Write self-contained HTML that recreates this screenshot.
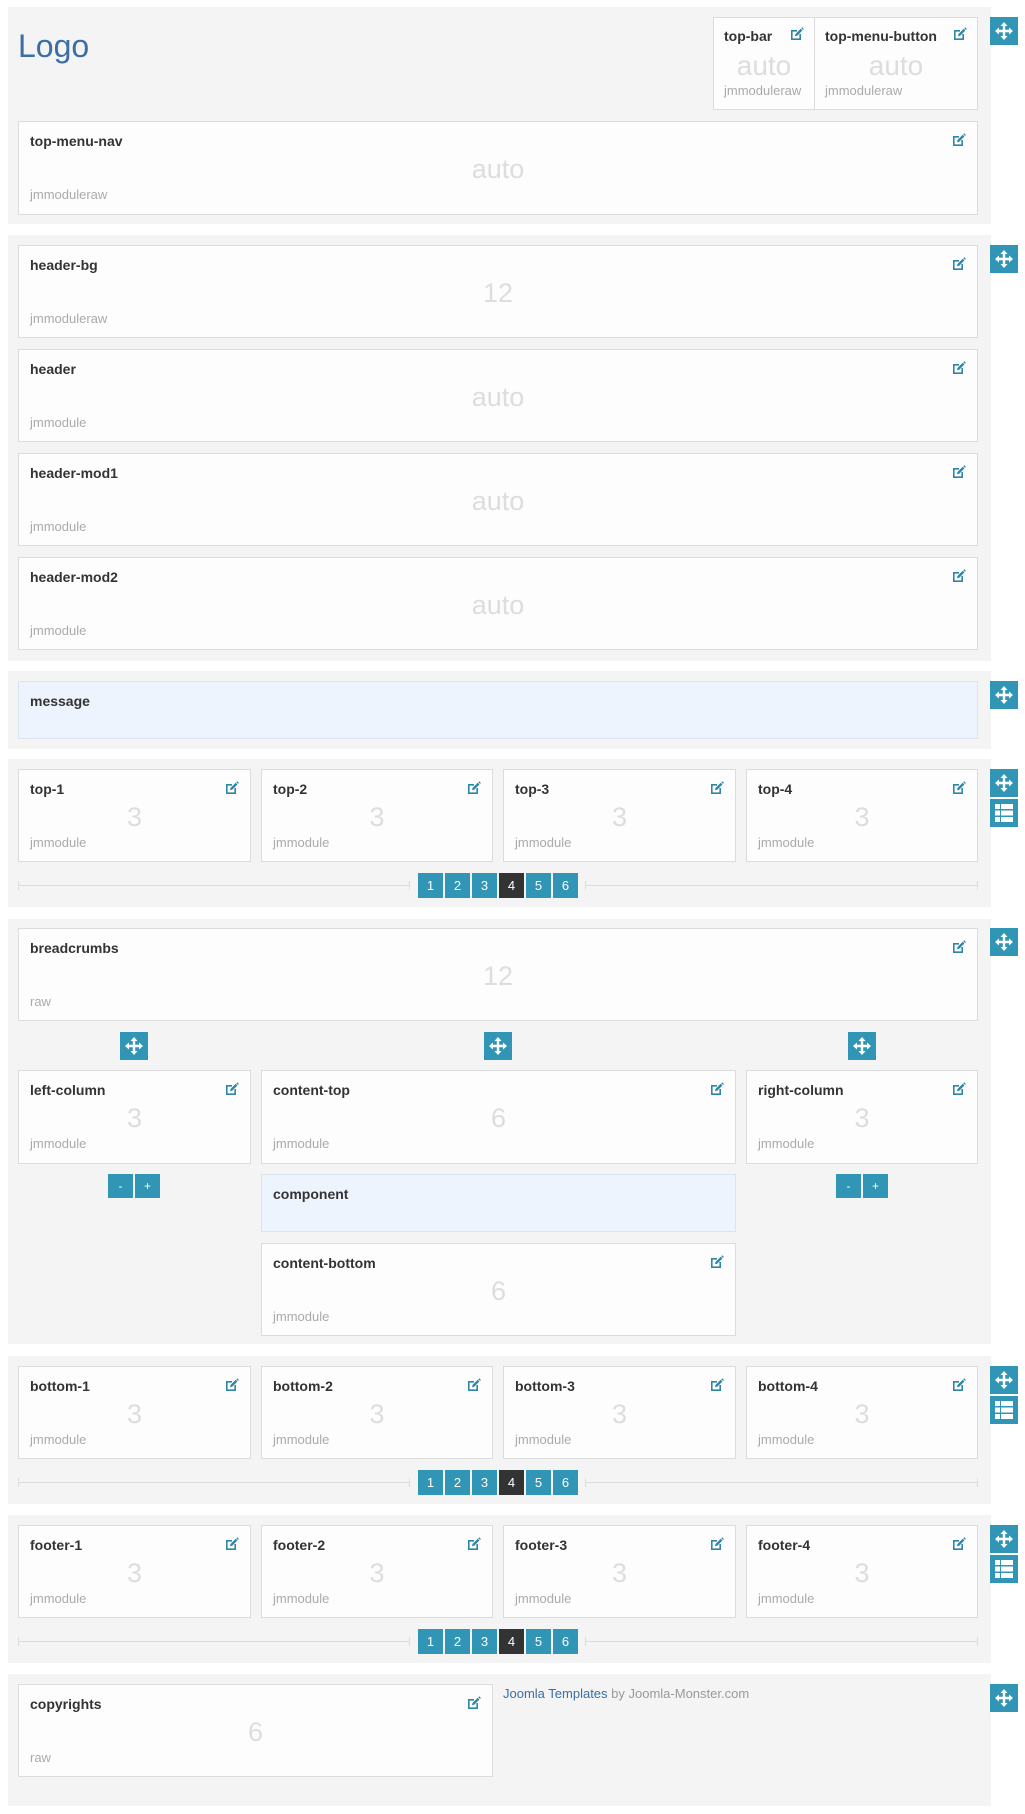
<!DOCTYPE html>
<html><head><meta charset="utf-8"><style>
*{box-sizing:border-box;margin:0;padding:0}
body{width:1025px;height:1814px;background:#fff;position:relative;font-family:"Liberation Sans",sans-serif;overflow:hidden}
.sec{position:absolute;left:8px;width:983px;background:#f4f4f4}
.b{position:absolute;background:#fdfdfd;border:1px solid #dcdcdc}
.b.m{background:#edf4fd;border-color:#dbe3ee}
.t{position:absolute;left:11px;top:11px;font-size:14px;line-height:16px;font-weight:bold;color:#333}
.n{position:absolute;left:0;right:0;top:32px;text-align:center;font-size:27px;line-height:30px;color:#ddd}
.s{position:absolute;left:11px;top:65px;font-size:13px;line-height:15px;color:#aaa}
.e{position:absolute;right:11px;top:11px;width:14px;height:14px}
.mv{position:absolute;width:28px;height:28px;background:#3196b6}
.mv svg,.ls svg{position:absolute;left:5px;top:5px}
.ls{position:absolute;width:28px;height:28px;background:#3196b6}
.pg{position:absolute;left:18px;width:960px;height:25px}
.pg .ln{position:absolute;top:12px;height:1px;background:#ddd}
.pg .ln.l{left:0;width:392px}.pg .ln.r{left:567px;right:0}
.pg .ln:before,.pg .ln:after{content:"";position:absolute;top:-4px;width:1px;height:9px;background:#ddd}
.pg .ln:before{left:0}.pg .ln:after{right:0}
.pg span{position:absolute;top:0;width:25px;height:25px;background:#3196b6;color:#fff;font-size:13px;line-height:25px;text-align:center}
.pg span.a{background:#333}
.pm{position:absolute;width:24px;height:24px;background:#3196b6;color:#fff;font-size:12px;line-height:24px;text-align:center}
</style></head><body>
<svg width="0" height="0" style="position:absolute"><defs>
<symbol id="ed" viewBox="0 0 14 14"><path d="M1 3h6v1.6H2.6v6.8h6.8V7H11v6H1z" fill="#2f86a6"/><path d="M5 9.2l.5-2.2 5.2-5.2 1.7 1.7-5.2 5.2z" fill="#2f86a6"/><path d="M11.3 1.2l.9-.9 1.7 1.7-.9.9z" fill="#2f86a6"/></symbol>
<symbol id="mvI" viewBox="0 0 18 18"><path d="M9 0l3.5 4H10.2v3.8H14V5.5l4 3.5-4 3.5v-2.3h-3.8V14h2.3L9 18l-3.5-4h2.3v-3.8H4v2.3L0 9l4-3.5v2.3h3.8V4H5.5z" fill="#fff"/></symbol>
<symbol id="lsI" viewBox="0 0 18 18"><path d="M0 0h5v5H0zM6 0h12v5H6zM0 6.5h5v5H0zM6 6.5h12v5H6zM0 13h5v5H0zM6 13h12v5H6z" fill="#fff"/></symbol>
</defs></svg>

<!-- section 1 -->
<div class="sec" style="top:7px;height:217px"></div>
<div style="position:absolute;left:18px;top:26px;font-size:32px;color:#3a6ea5;line-height:40px">Logo</div>
<div class="b" style="left:713px;top:17px;width:102px;height:93px"><div class="t" style="left:10px;top:10px">top-bar</div><svg class="e" style="right:10px;top:9px"><use href="#ed"/></svg><div class="n" style="top:33px;font-size:28px">auto</div><div class="s" style="left:10px;top:65px">jmmoduleraw</div></div>
<div class="b" style="left:814px;top:17px;width:164px;height:93px"><div class="t" style="left:10px;top:10px">top-menu-button</div><svg class="e" style="right:10px;top:9px"><use href="#ed"/></svg><div class="n" style="top:33px;font-size:28px">auto</div><div class="s" style="left:10px;top:65px">jmmoduleraw</div></div>
<div class="b" style="left:18px;top:121px;width:960px;height:94px"><div class="t">top-menu-nav</div><svg class="e"><use href="#ed"/></svg><div class="n">auto</div><div class="s">jmmoduleraw</div></div>
<div class="mv" style="left:990px;top:17px"><svg width="18" height="18"><use href="#mvI"/></svg></div>

<!-- section 2 -->
<div class="sec" style="top:235px;height:426px"></div>
<div class="b" style="left:18px;top:245px;width:960px;height:93px"><div class="t">header-bg</div><svg class="e"><use href="#ed"/></svg><div class="n">12</div><div class="s">jmmoduleraw</div></div>
<div class="b" style="left:18px;top:349px;width:960px;height:93px"><div class="t">header</div><svg class="e"><use href="#ed"/></svg><div class="n">auto</div><div class="s">jmmodule</div></div>
<div class="b" style="left:18px;top:453px;width:960px;height:93px"><div class="t">header-mod1</div><svg class="e"><use href="#ed"/></svg><div class="n">auto</div><div class="s">jmmodule</div></div>
<div class="b" style="left:18px;top:557px;width:960px;height:93px"><div class="t">header-mod2</div><svg class="e"><use href="#ed"/></svg><div class="n">auto</div><div class="s">jmmodule</div></div>
<div class="mv" style="left:990px;top:245px"><svg width="18" height="18"><use href="#mvI"/></svg></div>

<!-- section 3 -->
<div class="sec" style="top:671px;height:78px"></div>
<div class="b m" style="left:18px;top:681px;width:960px;height:58px"><div class="t">message</div></div>
<div class="mv" style="left:990px;top:681px"><svg width="18" height="18"><use href="#mvI"/></svg></div>

<!-- section 4 -->
<div class="sec" style="top:759px;height:148px"></div>
<div class="b" style="left:18px;top:769px;width:233px;height:93px"><div class="t">top-1</div><svg class="e"><use href="#ed"/></svg><div class="n">3</div><div class="s">jmmodule</div></div>
<div class="b" style="left:261px;top:769px;width:232px;height:93px"><div class="t">top-2</div><svg class="e"><use href="#ed"/></svg><div class="n">3</div><div class="s">jmmodule</div></div>
<div class="b" style="left:503px;top:769px;width:233px;height:93px"><div class="t">top-3</div><svg class="e"><use href="#ed"/></svg><div class="n">3</div><div class="s">jmmodule</div></div>
<div class="b" style="left:746px;top:769px;width:232px;height:93px"><div class="t">top-4</div><svg class="e"><use href="#ed"/></svg><div class="n">3</div><div class="s">jmmodule</div></div>
<div class="pg" style="top:873px"><div class="ln l"></div><div class="ln r"></div><span style="left:400px">1</span><span style="left:427px">2</span><span style="left:454px">3</span><span class="a" style="left:481px">4</span><span style="left:508px">5</span><span style="left:535px">6</span></div>
<div class="mv" style="left:990px;top:769px"><svg width="18" height="18"><use href="#mvI"/></svg></div>
<div class="ls" style="left:990px;top:799px"><svg width="18" height="18"><use href="#lsI"/></svg></div>

<!-- section 5 -->
<div class="sec" style="top:919px;height:425px"></div>
<div class="b" style="left:18px;top:928px;width:960px;height:93px"><div class="t">breadcrumbs</div><svg class="e"><use href="#ed"/></svg><div class="n">12</div><div class="s">raw</div></div>
<div class="mv" style="left:120px;top:1032px"><svg width="18" height="18"><use href="#mvI"/></svg></div>
<div class="mv" style="left:484px;top:1032px"><svg width="18" height="18"><use href="#mvI"/></svg></div>
<div class="mv" style="left:848px;top:1032px"><svg width="18" height="18"><use href="#mvI"/></svg></div>
<div class="b" style="left:18px;top:1070px;width:233px;height:94px"><div class="t">left-column</div><svg class="e"><use href="#ed"/></svg><div class="n">3</div><div class="s">jmmodule</div></div>
<div class="b" style="left:261px;top:1070px;width:475px;height:94px"><div class="t">content-top</div><svg class="e"><use href="#ed"/></svg><div class="n">6</div><div class="s">jmmodule</div></div>
<div class="b" style="left:746px;top:1070px;width:232px;height:94px"><div class="t">right-column</div><svg class="e"><use href="#ed"/></svg><div class="n">3</div><div class="s">jmmodule</div></div>
<div class="pm" style="left:108px;top:1174px;width:25px">-</div><div class="pm" style="left:135px;top:1174px;width:25px">+</div>
<div class="pm" style="left:836px;top:1174px;width:25px">-</div><div class="pm" style="left:863px;top:1174px;width:25px">+</div>
<div class="b m" style="left:261px;top:1174px;width:475px;height:58px"><div class="t">component</div></div>
<div class="b" style="left:261px;top:1243px;width:475px;height:93px"><div class="t">content-bottom</div><svg class="e"><use href="#ed"/></svg><div class="n">6</div><div class="s">jmmodule</div></div>
<div class="mv" style="left:990px;top:928px"><svg width="18" height="18"><use href="#mvI"/></svg></div>

<!-- section 6 -->
<div class="sec" style="top:1356px;height:148px"></div>
<div class="b" style="left:18px;top:1366px;width:233px;height:93px"><div class="t">bottom-1</div><svg class="e"><use href="#ed"/></svg><div class="n">3</div><div class="s">jmmodule</div></div>
<div class="b" style="left:261px;top:1366px;width:232px;height:93px"><div class="t">bottom-2</div><svg class="e"><use href="#ed"/></svg><div class="n">3</div><div class="s">jmmodule</div></div>
<div class="b" style="left:503px;top:1366px;width:233px;height:93px"><div class="t">bottom-3</div><svg class="e"><use href="#ed"/></svg><div class="n">3</div><div class="s">jmmodule</div></div>
<div class="b" style="left:746px;top:1366px;width:232px;height:93px"><div class="t">bottom-4</div><svg class="e"><use href="#ed"/></svg><div class="n">3</div><div class="s">jmmodule</div></div>
<div class="pg" style="top:1470px"><div class="ln l"></div><div class="ln r"></div><span style="left:400px">1</span><span style="left:427px">2</span><span style="left:454px">3</span><span class="a" style="left:481px">4</span><span style="left:508px">5</span><span style="left:535px">6</span></div>
<div class="mv" style="left:990px;top:1366px"><svg width="18" height="18"><use href="#mvI"/></svg></div>
<div class="ls" style="left:990px;top:1396px"><svg width="18" height="18"><use href="#lsI"/></svg></div>

<!-- section 7 -->
<div class="sec" style="top:1515px;height:148px"></div>
<div class="b" style="left:18px;top:1525px;width:233px;height:93px"><div class="t">footer-1</div><svg class="e"><use href="#ed"/></svg><div class="n">3</div><div class="s">jmmodule</div></div>
<div class="b" style="left:261px;top:1525px;width:232px;height:93px"><div class="t">footer-2</div><svg class="e"><use href="#ed"/></svg><div class="n">3</div><div class="s">jmmodule</div></div>
<div class="b" style="left:503px;top:1525px;width:233px;height:93px"><div class="t">footer-3</div><svg class="e"><use href="#ed"/></svg><div class="n">3</div><div class="s">jmmodule</div></div>
<div class="b" style="left:746px;top:1525px;width:232px;height:93px"><div class="t">footer-4</div><svg class="e"><use href="#ed"/></svg><div class="n">3</div><div class="s">jmmodule</div></div>
<div class="pg" style="top:1629px"><div class="ln l"></div><div class="ln r"></div><span style="left:400px">1</span><span style="left:427px">2</span><span style="left:454px">3</span><span class="a" style="left:481px">4</span><span style="left:508px">5</span><span style="left:535px">6</span></div>
<div class="mv" style="left:990px;top:1525px"><svg width="18" height="18"><use href="#mvI"/></svg></div>
<div class="ls" style="left:990px;top:1555px"><svg width="18" height="18"><use href="#lsI"/></svg></div>

<!-- section 8 -->
<div class="sec" style="top:1674px;height:132px"></div>
<div class="b" style="left:18px;top:1684px;width:475px;height:93px"><div class="t">copyrights</div><svg class="e"><use href="#ed"/></svg><div class="n">6</div><div class="s">raw</div></div>
<div style="position:absolute;left:503px;top:1686px;font-size:13px;line-height:16px;color:#999"><span style="color:#3a6ea5">Joomla Templates</span> by Joomla-Monster.com</div>
<div class="mv" style="left:990px;top:1684px"><svg width="18" height="18"><use href="#mvI"/></svg></div>
</body></html>
